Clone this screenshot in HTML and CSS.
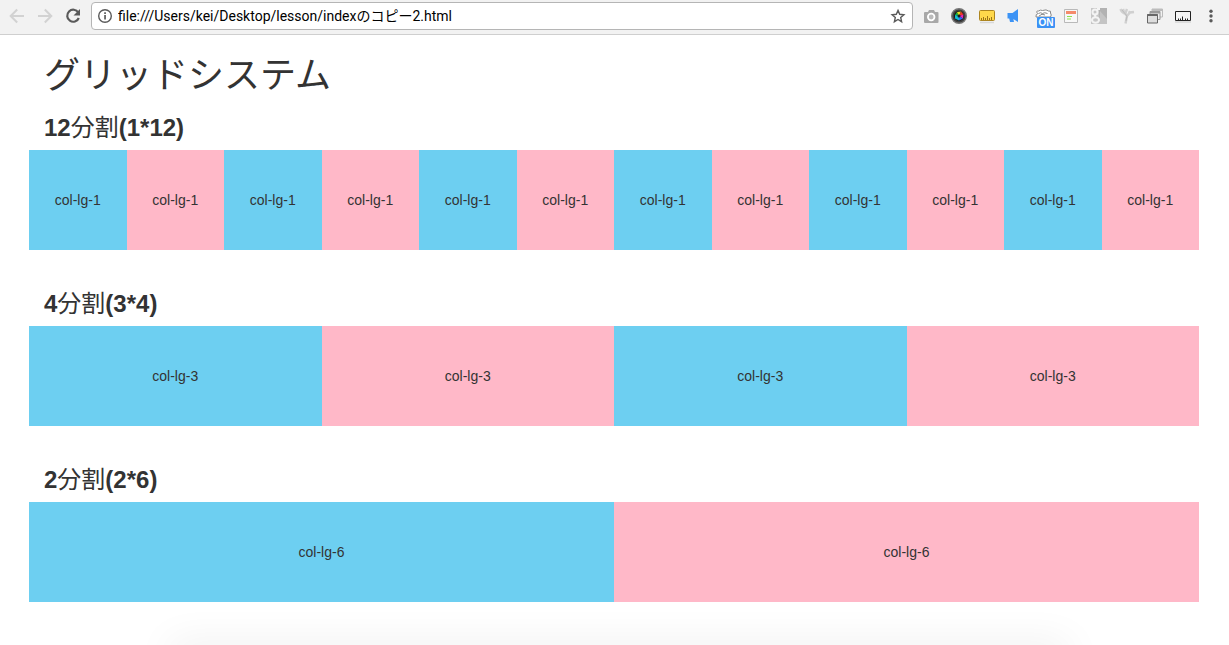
FILE: index.html
```html
<!DOCTYPE html>
<html lang="ja">
<head>
<meta charset="utf-8">
<title>グリッドシステム</title>
<link rel="stylesheet" href="styles.css">
</head>
<body>
<header class="toolbar">
  <button class="tool" type="button" aria-label="Back" disabled><svg viewBox="0 0 28 28" fill="none" stroke="#d2d2d2" stroke-width="2"><path d="M21 14H8M14.200 7.500L7.700 14l6.500 6.500"/></svg></button>
  <button class="tool" type="button" aria-label="Forward" disabled><svg viewBox="0 0 28 28" fill="none" stroke="#d2d2d2" stroke-width="2"><path d="M7 14h13M13.800 7.500l6.500 6.500-6.500 6.500"/></svg></button>
  <button class="tool" type="button" aria-label="Reload"><svg viewBox="0 0 28 28"><path d="M19.300 10.500A6 6 0 1 0 19.800 16" fill="none" stroke="#5a5a5a" stroke-width="2.200"/><path d="M21 7v6.500h-6.500z" fill="#5a5a5a"/></svg></button>
  <form class="omnibox">
    <svg class="info" viewBox="0 0 16 16"><circle cx="8" cy="8" r="6.300" fill="none" stroke="#5a5a5a" stroke-width="1.400"/><path d="M7.200 7h1.700v4.500H7.200zM7.200 4.300h1.700V6H7.200z" fill="#5a5a5a"/></svg>
    <input class="address" type="text" aria-label="Address" value="file:///Users/kei/Desktop/lesson/indexのコピー2.html">
    <button class="star" type="button" aria-label="Bookmark"><svg viewBox="0 0 16 16"><path d="M8 2.400l1.700 3.900 4.200.400-3.200 2.800.900 4.200L8 11.500l-3.600 2.200.900-4.200-3.200-2.800 4.200-.400z" fill="none" stroke="#5a5a5a" stroke-width="1.400"/></svg></button>
  </form>
  <div class="extensions">
    <button class="tool" type="button" aria-label="Capture"><svg viewBox="0 0 28 28"><path d="M8 10h3l1-2h5l1 2h2.500q1 0 1 1v9q0 1-1 1H8q-1 0-1-1v-9q0-1 1-1z" fill="#a8a8a8"/><circle cx="14.200" cy="15" r="3.300" fill="#bbb" stroke="#fff" stroke-width="1.800"/></svg></button>
    <button class="tool" type="button" aria-label="Color picker"><svg viewBox="0 0 28 28"><circle cx="14" cy="14" r="7.300" fill="#404040" stroke="#777" stroke-width="1.400"/><circle cx="14" cy="14" r="5" fill="#181818"/><path d="M14 14l-4-1 2-3z" fill="#19b43c"/><path d="M14 14l-2-4 4-.500z" fill="#e5dc20"/><path d="M14 14l2-4.500 2.500 3z" fill="#f13b26"/><path d="M14 14l4.500-1.500-.500 4z" fill="#e829ba"/><path d="M14 14l4 2.500-4 2z" fill="#2a6cff"/><path d="M14 14v4.500l-4-2V13z" fill="#12bed0"/><circle cx="14" cy="14" r="1.500" fill="#202020"/></svg></button>
    <button class="tool" type="button" aria-label="Ruler"><svg viewBox="0 0 28 28"><path d="M7 20.500h14" stroke="#d8d8d8" stroke-width="1.500"/><rect x="6.500" y="8.500" width="15" height="10" rx="1" fill="#ffd84b" stroke="#ad8520"/><path d="M8.500 18v-2M10.500 18v-3M12.500 18v-2M14.500 18v-4M16.500 18v-2M18.500 18v-3" stroke="#9c7419"/></svg></button>
    <button class="tool" type="button" aria-label="Announcements"><svg viewBox="0 0 28 28" fill="#3c93f5"><path d="M6.500 11h5L17 7v13l-5.500-3.500h-5zM8 15.500h4l1 4.500H9z"/></svg></button>
    <button class="tool" type="button" aria-label="Script switch"><svg viewBox="0 0 28 28"><g fill="#fff" stroke="#888" stroke-width="1"><path d="M7 15q-.500-3 2-3.500Q6 9 9.500 9q2-1.500 4-.500 4-1.500 6 .500 3-.500 2 2 1.500 2 0 4z"/><path d="M9.500 11.500q2-1.500 4 0 2-1.500 5 0M10 14q3-3 6-1" fill="none"/></g><rect x="8" y="15" width="18" height="11" rx="1" fill="#3b91f5"/><text class="badge-text" x="17" y="24" text-anchor="middle">ON</text></svg></button>
    <button class="tool" type="button" aria-label="Page notes"><svg viewBox="0 0 28 28"><path d="M7.500 7.500h13v13h-13z" fill="#f8f8f8" stroke="#b9b9b9"/><path d="M9 9h10v3H9z" fill="#f58b6b"/><path d="M10 14.500h5M10 17h4" stroke="#8ee34d" stroke-width="1.200"/></svg></button>
    <button class="tool" type="button" aria-label="Search"><svg viewBox="0 0 28 28"><path d="M6 6h16v16H6z" fill="#c7c7c7"/><path d="M14 6h8v16h-8z" fill="#b2b2b2"/><path d="M15 9l7 8v5h-8z" fill="#c4c4c4"/><g fill="none" stroke="#f4f4f4" stroke-width="2"><circle cx="10" cy="10" r="2.500"/><path d="M12 7h3M11 12q-2 1.500 0 2.500"/><ellipse cx="10.500" cy="18" rx="3.500" ry="2.700"/></g></svg></button>
    <button class="tool" type="button" aria-label="Branch"><svg viewBox="0 0 28 28" fill="none"><path d="M7.500 7q1 3 5 5l1.500 2-1.500 7.500M14 14l3-3.500 4-.500M10 7l1 3M14 7l-1.500 4M16 11l1-2" stroke="#d0d0d0" stroke-width="2.400"/><path d="M9 8l5 6-1 5" stroke="#bcbcbc"/></svg></button>
    <button class="tool" type="button" aria-label="Windows"><svg viewBox="0 0 28 28" fill="none"><path d="M11 7h10.500v8H11z" stroke="#bcbcbc"/><path d="M11 8h10.500" stroke="#bcbcbc" stroke-width="2"/><path d="M9 9.500h10v8H9z" fill="#eee" stroke="#999"/><path d="M9 10.500h10" stroke="#999" stroke-width="2"/><path d="M6.500 12.500h10v8.500h-10z" fill="#ddd" stroke="#666"/><path d="M6.500 13h10" stroke="#666" stroke-width="2"/></svg></button>
    <button class="tool" type="button" aria-label="Measure"><svg viewBox="0 0 28 28" fill="none"><path d="M6 20h16" stroke="#ddd" stroke-width="2"/><path d="M6.500 9.500h15v9h-15z" fill="#f5f5f5" stroke="#222"/><path d="M9.500 18.500v-2M11.500 18.500v-2M13.500 18.500v-4M16.500 18.500v-2M18.500 18.500v-2" stroke="#222"/></svg></button>
    <button class="tool" type="button" aria-label="Menu"><svg viewBox="0 0 28 28" fill="#5a5a5a"><circle cx="14" cy="9.200" r="1.700"/><circle cx="14" cy="14" r="1.700"/><circle cx="14" cy="18.800" r="1.700"/></svg></button>
  </div>
</header>
<main class="container">
  <h1 class="title">グリッドシステム</h1>
  <section class="section">
    <h3 class="heading">12<span class="kanji">分割</span>(1*12)</h3>
    <div class="row">
      <div class="col">col-lg-1</div><div class="col">col-lg-1</div><div class="col">col-lg-1</div><div class="col">col-lg-1</div>
      <div class="col">col-lg-1</div><div class="col">col-lg-1</div><div class="col">col-lg-1</div><div class="col">col-lg-1</div>
      <div class="col">col-lg-1</div><div class="col">col-lg-1</div><div class="col">col-lg-1</div><div class="col">col-lg-1</div>
    </div>
  </section>
  <section class="section">
    <h3 class="heading">4<span class="kanji">分割</span>(3*4)</h3>
    <div class="row">
      <div class="col">col-lg-3</div><div class="col">col-lg-3</div><div class="col">col-lg-3</div><div class="col">col-lg-3</div>
    </div>
  </section>
  <section class="section">
    <h3 class="heading">2<span class="kanji">分割</span>(2*6)</h3>
    <div class="row">
      <div class="col">col-lg-6</div><div class="col">col-lg-6</div>
    </div>
  </section>
</main>
<div class="shade"></div>
</body>
</html>
```

FILE: styles.css
```css
* {
  box-sizing: border-box;
}

body {
  margin: 0;
  background: #fff;
  color: #333;
  font: 14px/20px "Liberation Sans", "Noto Sans CJK JP", sans-serif;
}

button {
  padding: 0;
  border: 0;
  background: none;
}

svg {
  display: block;
}

.toolbar {
  display: flex;
  align-items: center;
  gap: 4px;
  height: 35px;
  padding: 0 4px 3px 3px;
  border-bottom: 1px solid #cfcfcf;
  background: #f2f2f2;
}

.tool {
  flex: none;
  width: 28px;
  height: 28px;
}

.tool + .tool {
  margin-left: -4px;
}

.extensions {
  display: flex;
}

.extensions .tool {
  margin-left: 0;
}

.badge-text {
  fill: #fff;
  font: bold 10px "Liberation Sans", sans-serif;
}

.omnibox {
  display: flex;
  flex: 1;
  align-items: center;
  gap: 5px;
  height: 28px;
  margin: 0;
  padding: 0 6px 0 5px;
  border: 1px solid #b5b5b5;
  border-radius: 4px;
  background: #fff;
}

.info,
.star {
  flex: none;
  width: 16px;
  height: 16px;
}

.address {
  flex: 1;
  min-width: 0;
  padding: 0;
  border: 0;
  outline: 0;
  background: none;
  color: #000;
  font: 14px/20px Roboto, "Noto Sans CJK JP", sans-serif;
}

.container {
  padding: 20px 30px 0 29px;
}

.title {
  margin: 0 0 18px;
  padding: 0 15px;
  font-size: 36px;
  font-weight: 400;
  line-height: 41px;
}

.section {
  margin-bottom: 40px;
}

.heading {
  margin: 0 0 8px;
  padding: 0 15px;
  font-size: 24px;
  font-weight: 700;
  line-height: 28px;
}

.kanji {
  font-weight: 400;
}

.row {
  display: flex;
}

.col {
  flex: 1;
  padding: 40px 0;
  background: #6dcff1;
  text-align: center;
}

.col:nth-child(even) {
  background: #ffb8c8;
}

.shade {
  position: fixed;
  right: 160px;
  bottom: -20px;
  left: 170px;
  height: 20px;
  box-shadow: 0 0 40px rgba(0, 0, 0, 0.09);
}
```
